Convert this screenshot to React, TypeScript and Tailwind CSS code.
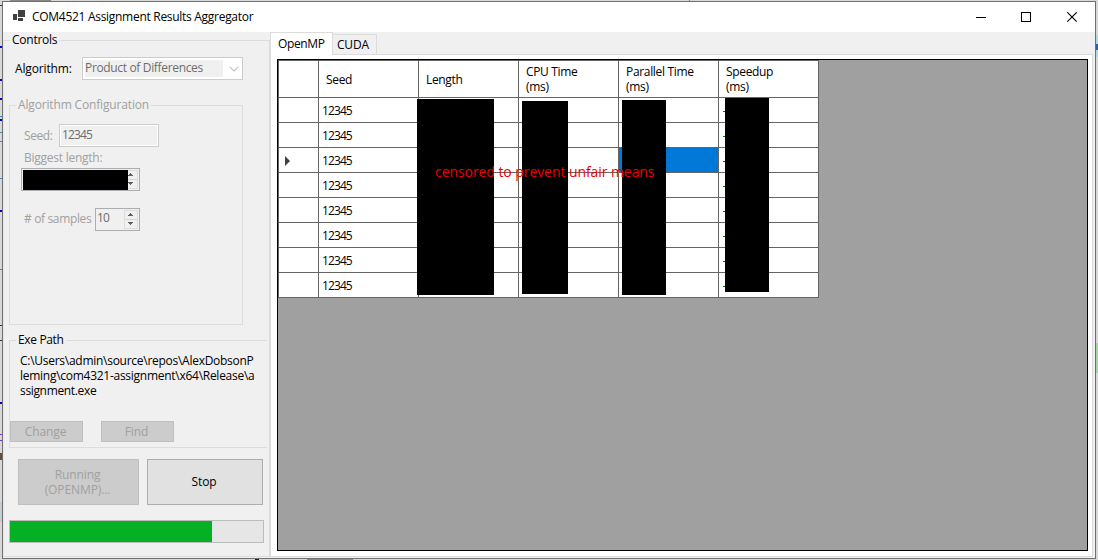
import type { ReactNode } from "react";

function GroupTitle({ children, className }: { children: ReactNode; className: string }) {
  return <span className={`absolute whitespace-nowrap bg-[#f0f0f0] px-[2px] leading-[15px] ${className}`}>{children}</span>;
}

function Spinner() {
  return (
    <div className="flex h-[19px] w-[14px] shrink-0 flex-col border border-[#dcdcdc] bg-[#f0f0f0]">
      <svg width="12" height="17" viewBox="0 0 12 17" shapeRendering="crispEdges">
        <path d="M5 2h1v1h1v1h1v1H3V4h1V3h1z M3 11h5v1H7v1H6v1H5v-1H4v-1H3z" fill="#606060" />
        <path d="M0 8h12v1H0z" fill="#d4d4d4" />
      </svg>
    </div>
  );
}

function TitleBar() {
  return (
    <header className="flex h-[30px] shrink-0 items-center bg-white pl-[10px]">
      <svg width="13" height="14" viewBox="0 0 13 14" shapeRendering="crispEdges" fill="#404040">
        <path d="M0 4h4v6H0z M5 0h7v7H5z M5 8h5v3H5z" />
      </svg>
      <h1 className="ml-[6px] whitespace-nowrap text-[12px] tracking-[-0.29px]">COM4521 Assignment Results Aggregator</h1>
      <div className="ml-auto mr-[17px] flex items-center gap-[35px]">
        <svg width="11" height="11" viewBox="0 0 11 11" shapeRendering="crispEdges"><path d="M1 5h10v1H1z" /></svg>
        <svg width="11" height="11" viewBox="0 0 11 11" shapeRendering="crispEdges"><path d="M.5.5h9v9h-9z" fill="none" stroke="#000" /></svg>
        <svg width="11" height="11" viewBox="0 0 11 11"><path d="M.3.3l9.4 9.4M9.7.3L.3 9.7" stroke="#000" strokeWidth="1.1" /></svg>
      </div>
    </header>
  );
}

function Sidebar() {
  return (
    <aside className="w-[267px] shrink-0 pt-[8px]">
      <section className="relative flex h-[517px] flex-col border border-[#dcdcdc] border-l-[#e6e6e6]">
        <GroupTitle className="left-[6px] top-[-9px] tracking-[-0.25px]">Controls</GroupTitle>

        <div className="ml-[11px] mt-[16px] flex h-[23px] items-center">
          <label className="w-[67px] tracking-[-0.15px]">Algorithm:</label>
          <div className="flex h-[23px] w-[161px] items-center border border-[#cccccc] bg-white pl-[2px]">
            <span className="h-[17px] w-[138px] bg-[#f0f0f0] leading-[16px] tracking-[-0.34px] text-[#6d6d6d]">Product of Differences</span>
            <svg className="ml-[6px]" width="10" height="6" viewBox="0 0 10 6"><path d="M.8.8L5 5 9.2.8" fill="none" stroke="#bfbfbf" strokeWidth="1.1" /></svg>
          </div>
        </div>

        <section className="relative ml-[5px] mt-[25px] flex h-[220px] w-[234px] flex-col border border-[#dcdcdc] pt-[18px] text-[#a0a0a0]">
          <GroupTitle className="left-[6px] top-[-9px] tracking-[-0.16px]">Algorithm Configuration</GroupTitle>
          <div className="flex h-[23px] items-center pl-[14px]">
            <label className="w-[35px] tracking-[-0.4px]">Seed:</label>
            <div className="h-[23px] w-[100px] border border-[#cccccc] bg-white p-px">
              <div className="h-full bg-[#f0f0f0] pl-px leading-[18px] tracking-[-0.85px] text-[#6d6d6d]">12345</div>
            </div>
          </div>
          <label className="mt-[3px] h-[15px] pl-[14px] leading-[15px] tracking-[-0.25px]">Biggest length:</label>
          <div className="ml-[11px] mt-[3px] flex h-[23px] w-[119px] items-center border border-[#abadb3] bg-[#f0f0f0] pl-px">
            <div className="relative z-10 -mr-[4px] h-[20px] w-[105px] shrink-0 bg-black" />
            <Spinner />
          </div>
          <div className="mt-[17px] flex h-[23px] items-center pl-[14px]">
            <label className="-mt-[2px] w-[71px] whitespace-nowrap tracking-[-0.35px]"># of samples</label>
            <div className="flex h-[23px] w-[45px] items-center border border-[#abadb3] pl-px text-[#6d6d6d]">
              <span className="-mt-[3px] w-[27px] tracking-[-0.8px]">10</span>
              <Spinner />
            </div>
          </div>
        </section>

        <section className="relative ml-[5px] mt-[15px] flex h-[108px] w-[258px] flex-col border-y border-l border-[#dcdcdc]">
          <GroupTitle className="left-[6px] top-[-9px] tracking-[-0.35px]">Exe Path</GroupTitle>
          <p className="ml-[10px] mt-[12px] h-[45px] whitespace-nowrap leading-[15px]">
            <span className="block tracking-[-0.27px]">{"C:\\Users\\admin\\source\\repos\\AlexDobsonP"}</span>
            <span className="block tracking-[-0.27px]">{"leming\\com4321-assignment\\x64\\Release\\a"}</span>
            <span className="block tracking-[-0.34px]">ssignment.exe</span>
          </p>
          <div className="mt-[23px] flex gap-[18px] tracking-[-0.1px] text-[#a0a0a0]">
            <button className="h-[21px] w-[73px] border border-[#bfbfbf] bg-[#cccccc] pr-[2px] leading-[19px]">Change</button>
            <button className="h-[21px] w-[73px] border border-[#bfbfbf] bg-[#cccccc] pr-[2px] leading-[19px]">Find</button>
          </div>
        </section>

        <div className="ml-[14px] mt-[11px] flex gap-[8px] leading-[15px]">
          <button className="h-[46px] w-[121px] border border-[#bfbfbf] bg-[#cccccc] pr-[2px] tracking-[-0.1px] text-[#a0a0a0]">Running<br />(OPENMP)...</button>
          <button className="h-[46px] w-[116px] border border-[#adadad] bg-[#e1e1e1] pb-[2px] pr-[2px] tracking-[-0.15px]">Stop</button>
        </div>
        <div className="ml-[5px] mt-[15px] h-[23px] w-[255px] border border-[#bcbcbc] bg-[#e6e6e6]">
          <div className="h-full w-[202px] bg-[#06b025]" />
        </div>
      </section>
    </aside>
  );
}

const headers = ["Seed", "Length", "CPU Time\n(ms)", "Parallel Time\n(ms)", "Speedup\n(ms)"];
const rows = [0, 1, 2, 3, 4, 5, 6, 7];

function ResultsGrid() {
  return (
    <div className="relative h-[492px] w-[811px] border border-black bg-[#a0a0a0]">
      <div className="w-[541px] border-l border-t border-[#646464] bg-white">
        <div className="grid h-[37px] grid-cols-[40px_repeat(5,100px)]">
          <div className="border-b border-r border-[#646464]" />
          {headers.map((h) => (
            <div key={h} className="flex items-center whitespace-pre border-b border-r border-[#646464] pl-[7px] leading-[15px] tracking-[-0.33px]">{h}</div>
          ))}
        </div>
        {rows.map((r) => (
          <div key={r} className="grid h-[25px] grid-cols-[40px_repeat(5,100px)] grid-rows-[25px]">
            <div className="flex items-center border-b border-r border-[#646464] pl-[6px]">
              {r === 2 && <svg className="mt-[2px]" width="5" height="10" viewBox="0 0 5 10"><path d="M0 0l5 5-5 5z" fill="#404040" /></svg>}
            </div>
            <div className="border-b border-r border-[#646464] pl-[3px] pt-px leading-[23px] tracking-[-0.9px]">12345</div>
            <div className="border-b border-r border-[#646464]" />
            <div className="border-b border-r border-[#646464]" />
            <div className={r === 2 ? "border-b border-r border-[#646464] bg-[#0078d7]" : "border-b border-r border-[#646464]"} />
            <div className="flex items-center border-b border-r border-[#646464] pl-[4px]"><span className="mt-[3px] h-px w-[3px] bg-[#008000]" /></div>
          </div>
        ))}
      </div>
      <div className="absolute left-[139px] top-[39px] h-[196px] w-[77px] bg-black" />
      <div className="absolute left-[244px] top-[41px] h-[193px] w-[46px] bg-black" />
      <div className="absolute left-[344px] top-[40px] h-[195px] w-[44px] bg-black" />
      <div className="absolute left-[447px] top-[38px] h-[194px] w-[44px] bg-black" />
      <p className="absolute left-[157px] top-[102px] whitespace-nowrap text-[14px] leading-[20px] tracking-[-0.07px] text-[#ed0000]">censored to prevent unfair means</p>
    </div>
  );
}

function Results() {
  return (
    <main className="w-[823px] shrink-0">
      <nav className="flex h-[22px]">
        <div className="relative z-10 h-[23px] w-[63px] border-x border-t border-[#dcdcdc] bg-white pl-[7px] leading-[21px] tracking-[-0.35px]">OpenMP</div>
        <div className="mt-[2px] h-[20px] w-[44px] border-r border-t border-[#dcdcdc] pl-[4px] leading-[20px] tracking-[-0.2px]">CUDA</div>
      </nav>
      <div className="h-[503px] border border-[#dcdcdc] bg-white pl-[6px] pt-[4px]">
        <ResultsGrid />
      </div>
    </main>
  );
}

function Backdrop() {
  return (
    <svg className="absolute inset-0" width="1098" height="560" shapeRendering="crispEdges">
      <path d="M0 0h1098v560H0z" fill="#d8d8d8" />
      <path d="M0 47h2M0 80h2M0 99h2M0 120h2M0 211h2M0 403h2" stroke="#0000dd" strokeWidth="2" />
      <path d="M0 116h2M0 132h2M0 141h2M0 178h2M0 269h2" stroke="#2b91af" />
      <path d="M0 5h2M0 325h2M0 340h2M0 515h2" stroke="#333" />
      <path d="M0 434h2M0 440h2" stroke="#8a2be2" />
      <path d="M0 453h2v7H0z" fill="#70483c" />
      <path d="M0 502h2v20H0z" fill="#c4ccd4" />
      <path d="M1096 35h2v22h-2z" fill="#add8e6" />
      <path d="M1096 44h2v6h-2z" fill="#2364ad" />
      <path d="M1096 343h2v30h-2z" fill="#a5d6a5" />
      <path d="M307 559h46v1h-46z" fill="#b86ca8" />
      <path d="M255 559h4v1h-4z" fill="#222" />
      <path d="M10 0h41v1H10z M689 0h1v1h-1z" fill="#888" />
    </svg>
  );
}

export default function App() {
  return (
    <div className="relative h-[560px] w-[1098px] overflow-hidden pl-[2px] pt-px font-['Open_Sans','Noto_Sans',sans-serif] text-[12px] leading-[16px] text-black">
      <Backdrop />
      <div className="relative flex h-[558px] w-[1094px] flex-col border border-[#707070] bg-[#f0f0f0]">
        <TitleBar />
        <div className="flex flex-1">
          <Sidebar />
          <Results />
        </div>
      </div>
    </div>
  );
}
